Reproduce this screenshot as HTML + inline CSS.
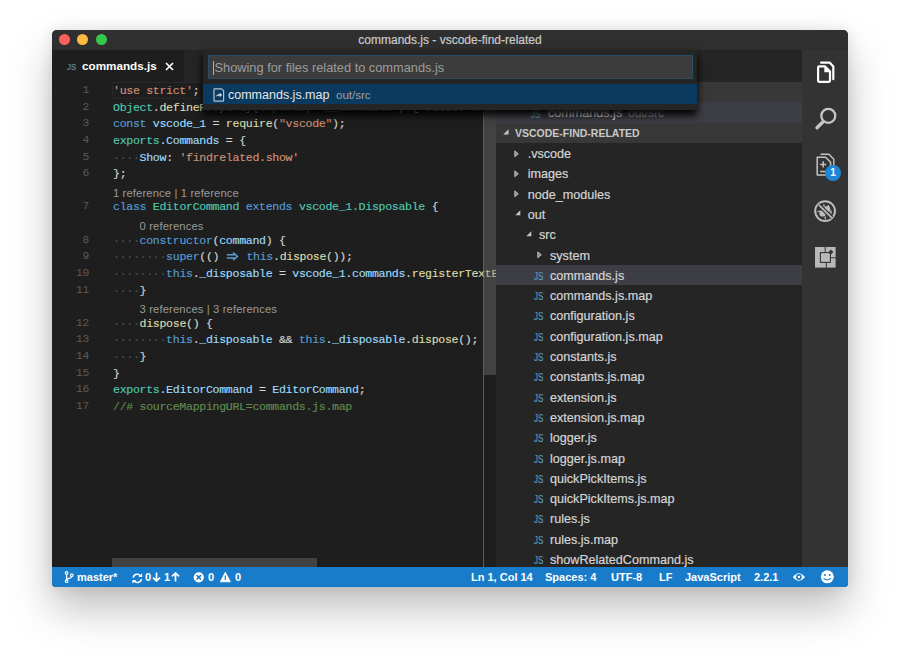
<!DOCTYPE html>
<html><head><meta charset="utf-8">
<style>
*{margin:0;padding:0;box-sizing:border-box}
html,body{width:900px;height:661px;overflow:hidden;background:#fff}
body{position:relative;font-family:"Liberation Sans",sans-serif}
.abs{position:absolute}
#win{position:absolute;left:52px;top:30px;width:796px;height:557px;border-radius:5px 5px 4px 4px;overflow:hidden;background:#1e1e1e;
 box-shadow:0 22px 42px rgba(0,0,0,0.25),0 0 14px rgba(0,0,0,0.1)}
#title{left:0;top:0;width:796px;height:20px;background:#2f2f2f;color:#cacaca;font-size:12px;text-align:center;line-height:20px;-webkit-text-stroke:0.2px}
.light{position:absolute;top:4px;width:11px;height:11px;border-radius:50%}
#tabs{left:0;top:20px;width:444px;height:32px;background:#252526}
#tab{left:0;top:0;width:132px;height:32px;background:#1e1e1e}
#editor{left:0;top:52px;width:444px;height:485px;background:#1e1e1e;overflow:hidden}
#side{left:444px;top:20px;width:306px;height:517px;background:#252526;overflow:hidden}
#act{left:750px;top:20px;width:46px;height:517px;background:#333333}
#status{left:0;top:537px;width:796px;height:20px;background:#197cca;color:#fff;font-size:11px;font-weight:bold}
.code{font-family:"Liberation Mono",monospace;font-size:11.6px;letter-spacing:-0.32px;-webkit-text-stroke:0.15px;white-space:pre;position:absolute;left:61px;height:17px;line-height:17px;color:#d4d4d4}
.ln{font-family:"Liberation Mono",monospace;font-size:11.3px;letter-spacing:-0.3px;position:absolute;left:0;width:37px;text-align:right;color:#5a5a5a;height:17px;line-height:17.5px}
.lens{position:absolute;font-size:11.25px;color:#9a9a9a;height:17px;line-height:22px;margin-left:0px;letter-spacing:0.12px}
.k{color:#569cd6}.s{color:#ce9178}.t{color:#4ec9b0}.f{color:#dcdcaa}.v{color:#9cdcfe}.c{color:#608b4e}.d{color:#505050}
.row{position:absolute;left:0;width:306px;height:20.3px;line-height:22px;font-size:12.6px;color:#d4d4d4;white-space:nowrap;-webkit-text-stroke:0.2px}
.js{position:absolute;font-family:"Liberation Sans",sans-serif;font-size:10px;color:#5b9cb8;letter-spacing:0;-webkit-text-stroke:0.15px;transform:scaleX(0.8);transform-origin:0 50%;top:1px}
.curline{position:absolute;left:60px;top:0;width:371px;height:17px;border:1px solid #282828}
.arr{letter-spacing:0}
#qo{left:151px;top:20px;width:494px;height:60px;background:#252526;box-shadow:0 5px 8px #000;z-index:5}
#qoin{left:4.5px;top:5px;width:485px;height:23.6px;background:#3c3c3c;border:1.3px solid #2a4d66;color:#9c9c9c;font-size:12.8px}
#qorow{left:0;top:33.5px;width:494px;height:20px;background:#0a3a5f}
.sel{background:#3d3e45}
.st{position:absolute;top:0;height:20px;line-height:20px;white-space:nowrap}
</style></head><body>
<div id="win">
 <div id="title" class="abs">commands.js - vscode-find-related
  <div class="light" style="left:7px;background:#fc605c"></div>
  <div class="light" style="left:25px;background:#fdbc40"></div>
  <div class="light" style="left:44px;background:#34c84a"></div>
 </div>
 <div id="tabs" class="abs">
  <div id="tab" class="abs">
   <div class="abs" style="left:14.5px;top:8.5px;font-size:9px;color:#5a8ca6;line-height:16px;-webkit-text-stroke:0.2px;transform:scaleX(0.88);transform-origin:0 50%">JS</div>
   <div class="abs" style="left:30px;top:8px;font-size:11.7px;font-weight:bold;color:#fff;line-height:16px">commands.js</div>
   <svg class="abs" style="left:113px;top:12px" width="9" height="9" viewBox="0 0 9 9"><path d="M1 1L8 8M8 1L1 8" stroke="#fff" stroke-width="1.7"/></svg>
  </div>
 </div>
 <div id="editor" class="abs">
<div class="abs" style="left:431px;top:0;width:1.4px;height:485px;background:rgba(140,140,140,0.55);z-index:3"></div>
<div class="abs" style="left:432px;top:0;width:12px;height:292.5px;background:rgba(121,121,121,0.4);z-index:2"></div>
<div class="abs" style="left:60px;top:476px;width:205px;height:9px;background:rgba(121,121,121,0.4);z-index:2"></div>
<div class="curline"></div>
<div class="ln" style="top:0.0px">1</div><div class="code" style="top:0.0px"><span class="s">'use strict'</span>;</div>
<div class="ln" style="top:16.63px">2</div><div class="code" style="top:16.63px"><span class="t">Object</span>.<span class="f">defineProperty</span>(<span class="t">exports</span>, <span class="s">"__esModule"</span>, { value: <span class="k">true</span> });</div>
<div class="ln" style="top:33.26px">3</div><div class="code" style="top:33.26px"><span class="k">const</span> <span class="v">vscode_1</span> = <span class="f">require</span>(<span class="s">"vscode"</span>);</div>
<div class="ln" style="top:49.89px">4</div><div class="code" style="top:49.89px"><span class="t">exports</span>.<span class="v">Commands</span> = {</div>
<div class="ln" style="top:66.52px">5</div><div class="code" style="top:66.52px"><span class="d">····</span><span class="v">Show</span>: <span class="s">'findrelated.show'</span></div>
<div class="ln" style="top:83.15px">6</div><div class="code" style="top:83.15px">};</div>
<div class="lens" style="top:99.78px;left:61.00px">1 reference | 1 reference</div>
<div class="ln" style="top:116.41px">7</div><div class="code" style="top:116.41px"><span class="k">class</span> <span class="t">EditorCommand</span> <span class="k">extends</span> <span class="t">vscode_1.Disposable</span> {</div>
<div class="lens" style="top:133.04px;left:87.56px">0 references</div>
<div class="ln" style="top:149.67px">8</div><div class="code" style="top:149.67px"><span class="d">····</span><span class="k">constructor</span>(<span class="v">command</span>) {</div>
<div class="ln" style="top:166.3px">9</div><div class="code" style="top:166.3px"><span class="d">········</span><span class="k">super</span>(() <span class="arr">  </span><svg style="position:absolute;left:112.9px;top:4.2px" width="13" height="9" viewBox="0 0 13 9"><path d="M0.8 2.7H9.4M0.8 6.1H9.4M7 0.5L11.4 4.4 7 8.3" fill="none" stroke="#569cd6" stroke-width="1.5"/></svg> <span class="k">this</span>.<span class="f">dispose</span>());</div>
<div class="ln" style="top:182.93px">10</div><div class="code" style="top:182.93px"><span class="d">········</span><span class="k">this</span>.<span class="v">_disposable</span> = <span class="v">vscode_1</span>.<span class="v">commands</span>.<span class="f">registerTextEditorCommand</span>(command,</div>
<div class="ln" style="top:199.56px">11</div><div class="code" style="top:199.56px"><span class="d">····</span>}</div>
<div class="lens" style="top:216.19px;left:87.56px">3 references | 3 references</div>
<div class="ln" style="top:232.82px">12</div><div class="code" style="top:232.82px"><span class="d">····</span><span class="f">dispose</span>() {</div>
<div class="ln" style="top:249.45px">13</div><div class="code" style="top:249.45px"><span class="d">········</span><span class="k">this</span>.<span class="v">_disposable</span> &amp;&amp; <span class="k">this</span>.<span class="v">_disposable</span>.<span class="f">dispose</span>();</div>
<div class="ln" style="top:266.08px">14</div><div class="code" style="top:266.08px"><span class="d">····</span>}</div>
<div class="ln" style="top:282.71px">15</div><div class="code" style="top:282.71px">}</div>
<div class="ln" style="top:299.34px">16</div><div class="code" style="top:299.34px"><span class="t">exports</span>.<span class="v">EditorCommand</span> = <span class="v">EditorCommand</span>;</div>
<div class="ln" style="top:315.97px">17</div><div class="code" style="top:315.97px"><span class="c">//# sourceMappingURL=commands.js.map</span></div>

</div>
 <div id="side" class="abs">
  <div class="abs" style="left:0;top:32px;width:306px;height:20.3px;background:#383838"></div>
  <div class="row sel" style="top:52.3px;line-height:23px"><span class="js" style="left:35px">JS</span><span class="abs" style="left:52px">commands.js</span><span class="abs" style="left:132px;font-size:12px;color:#8f8f8f">out/src</span></div>
  <div class="abs" style="left:0;top:72.6px;width:306px;height:20.4px;background:#383838"></div>
  <svg class="abs" style="left:7px;top:79px" width="6" height="6" viewBox="0 0 6 6"><path d="M5.5 0.3V5.5H0.3z" fill="#c5c5c5"/></svg>
  <div class="abs" style="left:19px;top:72.6px;line-height:20.4px;font-size:10.5px;font-weight:bold;color:#c8c8c8">VSCODE-FIND-RELATED</div>
<div class="row" style="top:93.00px"><svg class="abs" style="left:18.2px;top:6.8px" width="6" height="8" viewBox="0 0 6 8"><path d="M0.8 0.9L4.3 3.8 0.8 6.7z" fill="#8a8a8a" stroke="#c5c5c5" stroke-width="0.9" stroke-linejoin="round"/></svg><span class="abs" style="left:31.7px">.vscode</span></div>
<div class="row" style="top:113.30px"><svg class="abs" style="left:18.2px;top:6.8px" width="6" height="8" viewBox="0 0 6 8"><path d="M0.8 0.9L4.3 3.8 0.8 6.7z" fill="#8a8a8a" stroke="#c5c5c5" stroke-width="0.9" stroke-linejoin="round"/></svg><span class="abs" style="left:31.7px">images</span></div>
<div class="row" style="top:133.60px"><svg class="abs" style="left:18.2px;top:6.8px" width="6" height="8" viewBox="0 0 6 8"><path d="M0.8 0.9L4.3 3.8 0.8 6.7z" fill="#8a8a8a" stroke="#c5c5c5" stroke-width="0.9" stroke-linejoin="round"/></svg><span class="abs" style="left:31.7px">node_modules</span></div>
<div class="row" style="top:153.90px"><svg class="abs" style="left:18.5px;top:6.6px" width="6" height="6" viewBox="0 0 6 6"><path d="M5.3 0.3V5.3H0.3z" fill="#c5c5c5"/></svg><span class="abs" style="left:31.7px">out</span></div>
<div class="row" style="top:174.20px"><svg class="abs" style="left:30px;top:6.6px" width="6" height="6" viewBox="0 0 6 6"><path d="M5.3 0.3V5.3H0.3z" fill="#c5c5c5"/></svg><span class="abs" style="left:43px">src</span></div>
<div class="row" style="top:194.50px"><svg class="abs" style="left:40.5px;top:6.8px" width="6" height="8" viewBox="0 0 6 8"><path d="M0.8 0.9L4.3 3.8 0.8 6.7z" fill="#8a8a8a" stroke="#c5c5c5" stroke-width="0.9" stroke-linejoin="round"/></svg><span class="abs" style="left:54px">system</span></div>
<div class="row sel" style="top:214.80px"><span class="js" style="left:38px">JS</span><span class="abs" style="left:54px">commands.js</span></div>
<div class="row" style="top:235.10px"><span class="js" style="left:38px">JS</span><span class="abs" style="left:54px">commands.js.map</span></div>
<div class="row" style="top:255.40px"><span class="js" style="left:38px">JS</span><span class="abs" style="left:54px">configuration.js</span></div>
<div class="row" style="top:275.70px"><span class="js" style="left:38px">JS</span><span class="abs" style="left:54px">configuration.js.map</span></div>
<div class="row" style="top:296.00px"><span class="js" style="left:38px">JS</span><span class="abs" style="left:54px">constants.js</span></div>
<div class="row" style="top:316.30px"><span class="js" style="left:38px">JS</span><span class="abs" style="left:54px">constants.js.map</span></div>
<div class="row" style="top:336.60px"><span class="js" style="left:38px">JS</span><span class="abs" style="left:54px">extension.js</span></div>
<div class="row" style="top:356.90px"><span class="js" style="left:38px">JS</span><span class="abs" style="left:54px">extension.js.map</span></div>
<div class="row" style="top:377.20px"><span class="js" style="left:38px">JS</span><span class="abs" style="left:54px">logger.js</span></div>
<div class="row" style="top:397.50px"><span class="js" style="left:38px">JS</span><span class="abs" style="left:54px">logger.js.map</span></div>
<div class="row" style="top:417.80px"><span class="js" style="left:38px">JS</span><span class="abs" style="left:54px">quickPickItems.js</span></div>
<div class="row" style="top:438.10px"><span class="js" style="left:38px">JS</span><span class="abs" style="left:54px">quickPickItems.js.map</span></div>
<div class="row" style="top:458.40px"><span class="js" style="left:38px">JS</span><span class="abs" style="left:54px">rules.js</span></div>
<div class="row" style="top:478.70px"><span class="js" style="left:38px">JS</span><span class="abs" style="left:54px">rules.js.map</span></div>
<div class="row" style="top:499.00px"><span class="js" style="left:38px">JS</span><span class="abs" style="left:54px">showRelatedCommand.js</span></div>
 </div>
 <div id="act" class="abs">
  <svg class="abs" style="left:8px;top:6px" width="32" height="32" viewBox="0 0 32 32">
   <path d="M11 6.6H19.6L23.3 10.6V23.2" fill="none" stroke="#fff" stroke-width="2.2" stroke-linejoin="round" stroke-linecap="round"/>
   <path d="M9.8 10.3H14.8L20 15.6V24.6Q20 25.8 18.8 25.8H9.3Q8.1 25.8 8.1 24.6V11.5Q8.1 10.3 9.3 10.3z" fill="none" stroke="#fff" stroke-width="2.2" stroke-linejoin="round"/>
   <path d="M14.3 10.3V16.2H20.2z" fill="#fff"/>
  </svg>
  <svg class="abs" style="left:8px;top:53px" width="32" height="32" viewBox="0 0 32 32">
   <circle cx="18.3" cy="12.8" r="7" fill="none" stroke="#c5c5c5" stroke-width="2.3"/>
   <path d="M7 24.8L12.8 19" stroke="#c5c5c5" stroke-width="3.4" stroke-linecap="round"/>
  </svg>
  <svg class="abs" style="left:6.2px;top:98px" width="32" height="32" viewBox="0 0 32 32">
   <path d="M12.6 6.3H21L25.8 11.3V22" fill="none" stroke="#c5c5c5" stroke-width="1.4" stroke-linejoin="round"/>
   <path d="M9.2 9.2H17.6L22.6 14.2V27H9.2z" fill="none" stroke="#c5c5c5" stroke-width="1.5" stroke-linejoin="round"/>
   <path d="M12.2 16.4H18.2M15.2 13.2V19.6M12.2 23.6H18" stroke="#c5c5c5" stroke-width="1.5"/>
  </svg>
  <div class="abs" style="left:23px;top:114.5px;width:16px;height:16px;border-radius:50%;background:#1f86d6;color:#fff;font-size:10px;font-weight:bold;text-align:center;line-height:16px">1</div>
  <svg class="abs" style="left:9px;top:147px" width="28" height="28" viewBox="0 0 28 28">
   <circle cx="14.1" cy="14.1" r="9.9" fill="none" stroke="#bdbdbd" stroke-width="2"/>
   <circle cx="16.2" cy="12" r="3.1" fill="#bdbdbd"/>
   <circle cx="11.6" cy="16.4" r="3.2" fill="#bdbdbd"/>
   <path d="M12.8 7.2L13.1 10.4M17.5 8L17.1 10.8M20.9 14.1H18.4M20.9 16.2L18.6 15.7M6.4 14.6L9.4 14.2M14.5 22.4L14.1 19.6" stroke="#bdbdbd" stroke-width="1.3"/>
   <path d="M7.6 7.6L20.8 20.8" stroke="#333" stroke-width="4"/>
   <path d="M7.8 7.8L20.8 20.8" stroke="#bdbdbd" stroke-width="1.8"/>
  </svg>
  <svg class="abs" style="left:9px;top:193px" width="28" height="28" viewBox="0 0 28 28">
   <rect x="4" y="4" width="20.6" height="20.6" fill="#b8b8b8"/>
   <path d="M14.2 4V9.2M15.3 19.6V24.6M19.6 14.8H24.6" stroke="#333" stroke-width="1"/>
   <rect x="9.4" y="9.6" width="10" height="9.8" fill="#b8b8b8" stroke="#333" stroke-width="1.1"/>
   <path d="M17.3 9.2L19.9 6.6 22.4 9.1 19.8 11.7z" fill="#333"/>
  </svg>
 </div>
 <div id="status" class="abs">
  <svg class="abs" style="left:12px;top:4px" width="11" height="12" viewBox="0 0 11 12">
   <circle cx="2.6" cy="1.9" r="1.3" fill="none" stroke="#fff" stroke-width="1.1"/>
   <circle cx="2.6" cy="10.2" r="1.3" fill="none" stroke="#fff" stroke-width="1.1"/>
   <circle cx="7.8" cy="4.2" r="1.3" fill="none" stroke="#fff" stroke-width="1.1"/>
   <path d="M2.6 3.2V8.9M7.6 5.5C7.4 7.6 3.2 7.2 2.8 9" fill="none" stroke="#fff" stroke-width="1.3"/>
  </svg>
  <span class="st" style="left:25px">master*</span>
  <svg class="abs" style="left:79.5px;top:5.5px" width="11" height="11" viewBox="0 0 11 11">
   <path d="M1.2 4.6A4.1 4.1 0 0 1 8.6 3.0M9.4 6.0A4.1 4.1 0 0 1 2.0 7.8" fill="none" stroke="#fff" stroke-width="1.5"/>
   <path d="M6.4 3.9H10.2V0.2z" fill="#fff"/><path d="M4.2 6.9H0.4V10.6z" fill="#fff"/>
  </svg>
  <span class="st" style="left:93px">0</span>
  <svg class="abs" style="left:100px;top:5px" width="9" height="10" viewBox="0 0 9 10"><path d="M4.5 0.5V9M1 5.6L4.5 9 8 5.6" fill="none" stroke="#fff" stroke-width="1.7" stroke-linejoin="miter"/></svg>
  <span class="st" style="left:112px">1</span>
  <svg class="abs" style="left:118.5px;top:5px" width="9" height="10" viewBox="0 0 9 10"><path d="M4.5 9.5V1M1 4.4L4.5 1 8 4.4" fill="none" stroke="#fff" stroke-width="1.7" stroke-linejoin="miter"/></svg>
  <svg class="abs" style="left:141px;top:4px" width="12" height="12" viewBox="0 0 12 12">
   <circle cx="5.8" cy="6.3" r="5.1" fill="#fff"/>
   <path d="M3.6 4.1L8 8.5M8 4.1L3.6 8.5" stroke="#197cca" stroke-width="1.6"/>
  </svg>
  <span class="st" style="left:156px">0</span>
  <svg class="abs" style="left:168px;top:4px" width="12" height="12" viewBox="0 0 12 12">
   <path d="M5.3 1.2L10.4 10.8H0.3z" fill="#fff" stroke="#fff" stroke-width="0.8" stroke-linejoin="round"/>
   <path d="M5.3 4.6V9" stroke="#197cca" stroke-width="1.2"/>
  </svg>
  <span class="st" style="left:183px">0</span>
  <span class="st" style="left:419px">Ln 1, Col 14</span>
  <span class="st" style="left:493px">Spaces: 4</span>
  <span class="st" style="left:559px">UTF-8</span>
  <span class="st" style="left:607px">LF</span>
  <span class="st" style="left:633px">JavaScript</span>
  <span class="st" style="left:702px">2.2.1</span>
  <svg class="abs" style="left:740px;top:4px" width="14" height="12" viewBox="0 0 14 12">
   <path d="M0.8 6Q6.8 -1.6 13 6Q6.8 13.6 0.8 6z" fill="#fff"/>
   <circle cx="6.9" cy="6" r="2.9" fill="#197cca"/><circle cx="6.9" cy="6" r="1.3" fill="#fff"/>
  </svg>
  <svg class="abs" style="left:768px;top:3px" width="14" height="14" viewBox="0 0 14 14">
   <circle cx="7.3" cy="6.8" r="6.5" fill="#fff"/>
   <circle cx="5" cy="5" r="1" fill="#197cca"/><circle cx="9.6" cy="5" r="1" fill="#197cca"/>
   <path d="M3.6 8.4Q7.3 11.6 11 8.4" fill="none" stroke="#197cca" stroke-width="1.2"/>
  </svg>
 </div>
 <div id="qo" class="abs">
  <div id="qoin" class="abs"><div class="abs" style="left:4.5px;top:4.5px;width:1px;height:14.5px;background:#aeafad"></div><span style="position:absolute;left:6px;top:0;line-height:23.5px">Showing for files related to commands.js</span></div>
  <div id="qorow" class="abs">
   <svg class="abs" style="left:10px;top:4px" width="12" height="14" viewBox="0 0 12 14"><path d="M1.5 0.9H8.6L10.6 2.9V12.6Q10.6 13.1 10.1 13.1H1.5Q1 13.1 1 12.6V1.4Q1 0.9 1.5 0.9z" fill="none" stroke="#b0c4d4" stroke-width="1.2" stroke-linejoin="round"/><path d="M2.6 8.8Q3.6 6.2 6.6 6.1V4.6L9.2 7.1 6.6 9.2V7.8Q4.2 7.6 2.6 8.8z" fill="#c8d6e0"/></svg>
   <span class="abs" style="left:25px;top:1px;line-height:21px;font-size:12.5px;color:#e6e6e6">commands.js.map</span>
   <span class="abs" style="left:133px;top:1px;line-height:21px;font-size:11.5px;color:#a0a0a0">out/src</span>
  </div>
 </div>
</div>
</body></html>
